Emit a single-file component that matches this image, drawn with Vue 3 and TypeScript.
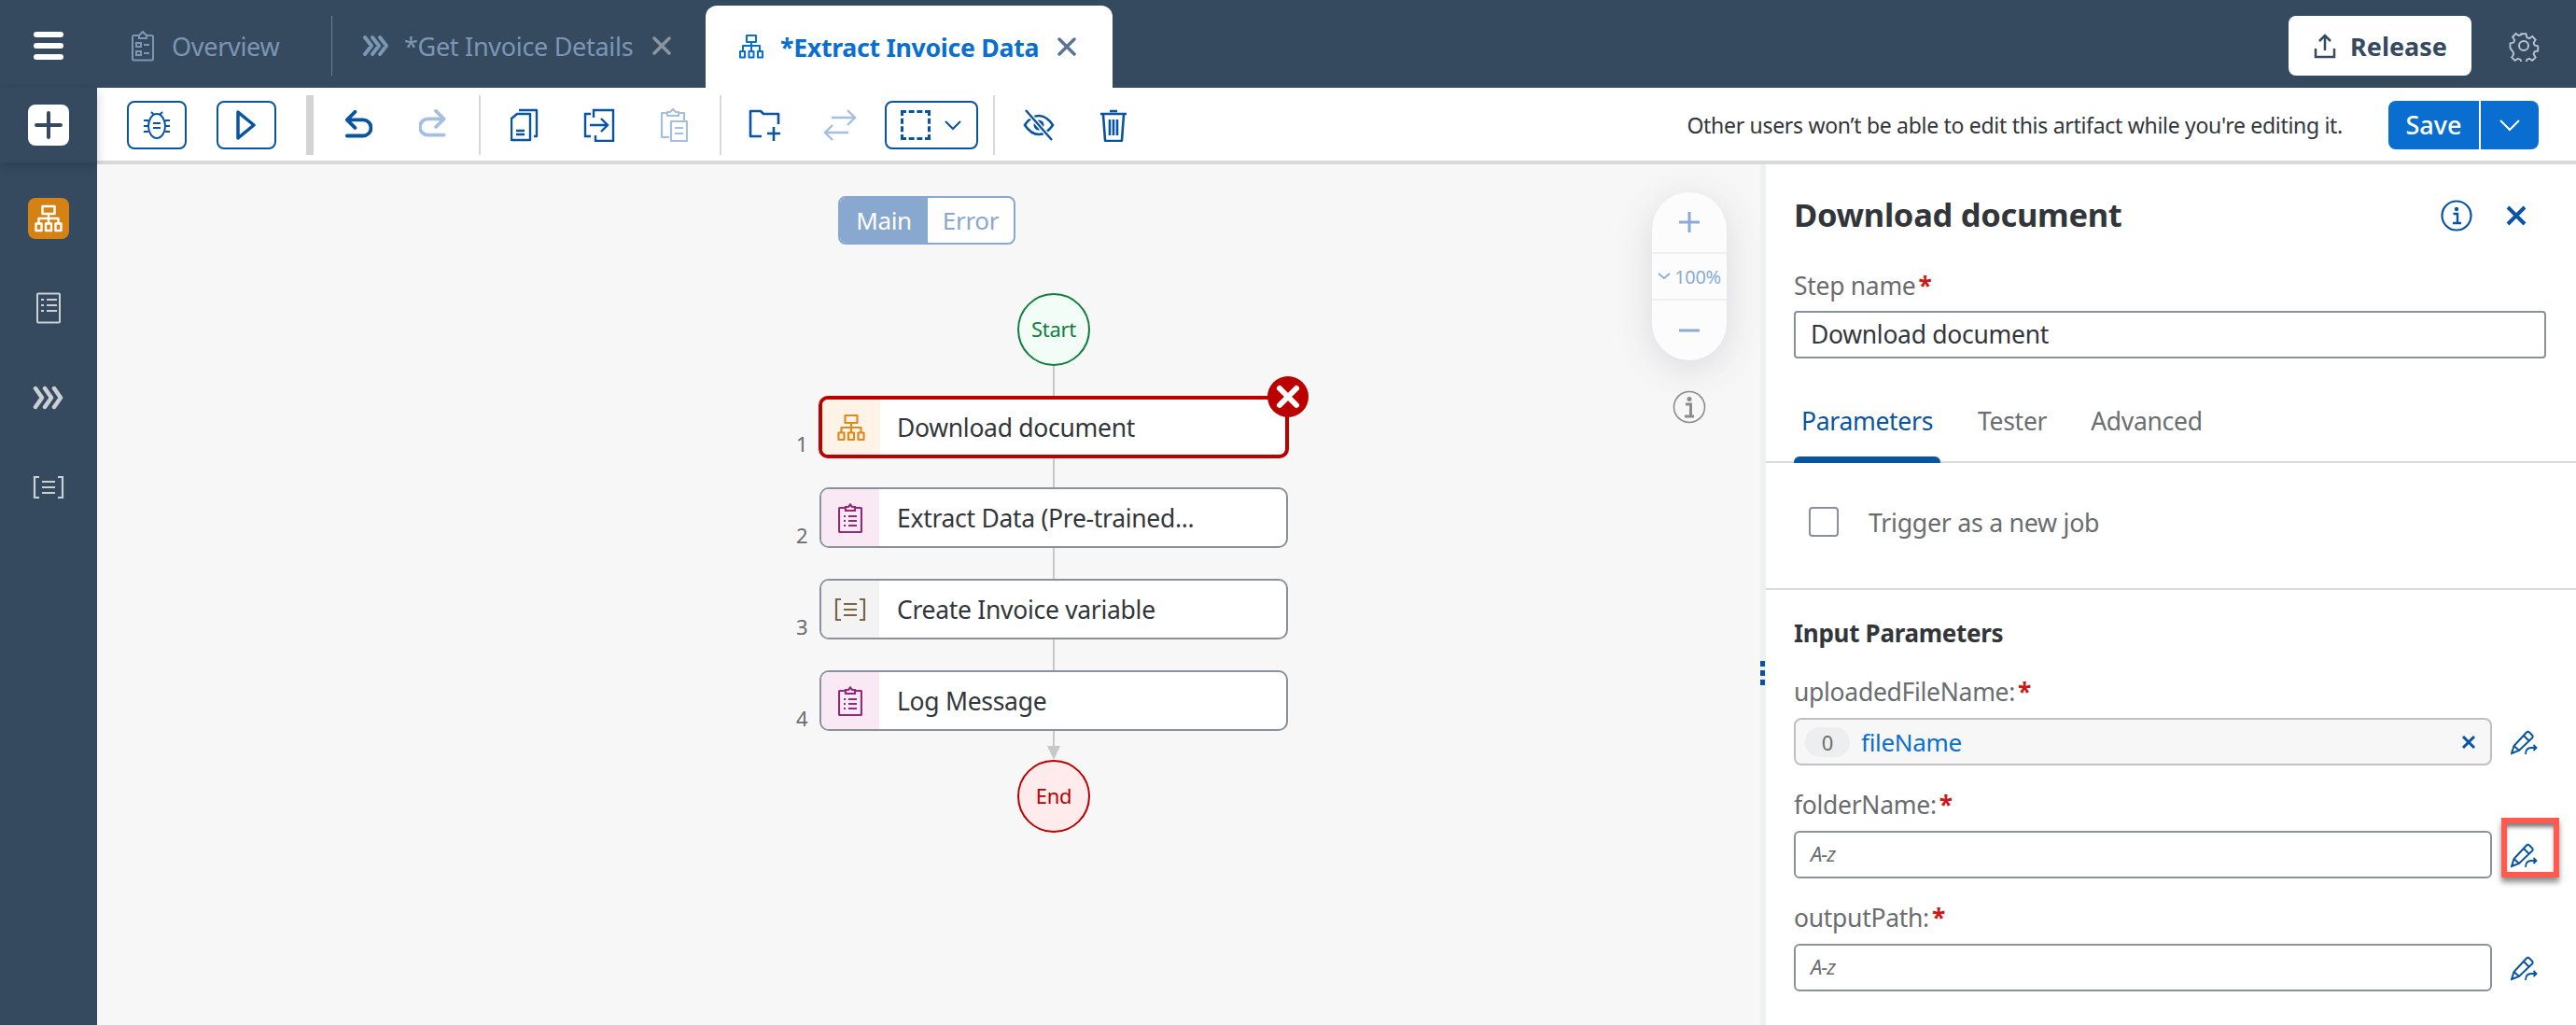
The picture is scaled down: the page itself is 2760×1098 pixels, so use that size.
<script setup lang="ts">
interface Step { n: number; label: string; kind: string }
const steps: Step[] = [
  { n: 1, label: 'Download document', kind: 'flow' },
  { n: 2, label: 'Extract Data (Pre-trained...', kind: 'clip' },
  { n: 3, label: 'Create Invoice variable', kind: 'var' },
  { n: 4, label: 'Log Message', kind: 'clip' },
]
const fields = [
  { label: 'folderName:', hl: true },
  { label: 'outputPath:', hl: false },
]
</script>

<template>
  <div class="app">
    <header class="topbar">
      <div class="burger"><i></i><i></i><i></i></div>
      <div class="tab t-over">
        <svg width="24" height="34" viewBox="0 0 24 34" class="dim"><path d="M8 6H2.500A1.500 1.500 0 0 0 1 7.500V31a1.500 1.500 0 0 0 1.500 1.500h19A1.500 1.500 0 0 0 23 31V7.500A1.500 1.500 0 0 0 21.500 6H16M8 6l4-4 4 4v3H8zM5 14h5v4H5zM13 16h6M5 23h5v4H5zM13 25h6" fill="none" stroke="currentColor" stroke-width="2"/></svg>
        <span>Overview</span>
      </div>
      <div class="tab-sep"></div>
      <div class="tab t-get">
        <svg width="29" height="24" viewBox="0 0 29 24" class="dim"><path d="M3 3l7 9-7 9M11 3l7 9-7 9M19 3l7 9-7 9" fill="none" stroke="currentColor" stroke-width="4" stroke-linecap="round" stroke-linejoin="round"/></svg>
        <span>*Get Invoice Details</span>
        <svg width="20" height="20" viewBox="0 0 20 20" class="tab-x"><path d="M2 2l16 16M18 2L2 18" stroke="currentColor" stroke-width="3.500" stroke-linecap="round"/></svg>
      </div>
      <div class="tab active">
        <svg width="26" height="26" viewBox="0 0 26 26"><path d="M8 1h10v7H8zM13 8v4M4 17v-5h18v5M13 12v5M1 18h5v6.500H1zM10.500 18h5v6.500h-5zM20 18h5v6.500h-5z" fill="none" stroke="currentColor" stroke-width="2" stroke-linejoin="round"/></svg>
        <span>*Extract Invoice Data</span>
        <svg width="20" height="20" viewBox="0 0 20 20" class="tab-x"><path d="M2 2l16 16M18 2L2 18" stroke="currentColor" stroke-width="3.500" stroke-linecap="round"/></svg>
      </div>
      <div class="grow"></div>
      <button class="release">
        <svg width="26" height="28" viewBox="0 0 26 28"><path d="M13 19V3M7 9l6-6 6 6M3 17v9h20v-9" fill="none" stroke="currentColor" stroke-width="2.500"/></svg>
        <span>Release</span>
      </button>
      <svg class="gear" width="34" height="34" viewBox="0 0 34 34"><path d="M14 2h6l1 4.500 3 1.300 4-2.500 4 4.200-2.500 4 1.200 3 4.300 1v6l-4.300 1-1.200 3 2.500 4-4 4.200-4-2.500-3 1.300-1 4.500h-6l-1-4.500-3-1.300-4 2.500-4-4.200 2.500-4-1.200-3L0 20v-6l4.300-1 1.200-3-2.500-4 4-4.200 4 2.500 3-1.300z" transform="translate(2.500 2.500) scale(.85)" fill="none" stroke="currentColor" stroke-width="2.200"/><circle cx="17" cy="17" r="5" fill="none" stroke="currentColor" stroke-width="2"/></svg>
    </header>

    <div class="body">
      <aside class="rail">
        <div class="rail-top">
          <button class="plus"><svg width="30" height="30" viewBox="0 0 30 30"><path d="M15 2v26M2 15h26" stroke="#354a5f" stroke-width="4" stroke-linecap="round"/></svg></button>
        </div>
        <div class="rail-list">
          <div class="rail-btn on"><svg width="30" height="30" viewBox="0 0 30 30"><path d="M8.500 2h13v8h-13zM15 10v5M4.500 20v-5h21v5M15 15v5M1.500 20.500h6V28h-6zM12 20.500h6V28h-6zM22.500 20.500h6V28h-6z" fill="none" stroke="#fff" stroke-width="2.400" stroke-linejoin="round"/></svg></div>
          <div class="rail-btn"><svg width="26" height="34" viewBox="0 0 26 34"><path d="M2 1.500h22a1 1 0 0 1 1 1v29a1 1 0 0 1-1 1H2a1 1 0 0 1-1-1v-29a1 1 0 0 1 1-1z" fill="none" stroke="#ccd0d4" stroke-width="2"/><path d="M5 8h3M11 8h11M5 14h3M11 14h11M5 20h3M11 20h11" stroke="#ccd0d4" stroke-width="2"/></svg></div>
          <div class="rail-btn"><svg width="34" height="26" viewBox="0 0 34 26"><path d="M3 3l7 10-7 10M13 3l7 10-7 10M23 3l7 10-7 10" fill="none" stroke="#ccd0d4" stroke-width="4.500" stroke-linecap="round" stroke-linejoin="round"/></svg></div>
          <div class="rail-btn"><svg width="34" height="26" viewBox="0 0 34 26"><path d="M7 2H2v22h5M27 2h5v22h-5M10 7h14M10 13h14M10 19h14" fill="none" stroke="#ccd0d4" stroke-width="2.200"/></svg></div>
        </div>
      </aside>

      <div class="main">
        <div class="toolbar">
          <button class="tb-box w64">
            <svg width="30" height="34" viewBox="0 0 30 34"><ellipse cx="15" cy="18" rx="9" ry="13" fill="none" stroke="currentColor" stroke-width="2"/><path d="M9 3l3 3M21 3l-3 3M1 12h5M1 18h5M1 24h5M24 12h5M24 18h5M24 24h5M11 15h8M11 20h8" stroke="currentColor" stroke-width="2"/></svg>
          </button>
          <button class="tb-box w64 ml32">
            <svg width="24" height="34" viewBox="0 0 24 34"><path d="M3 3l17 14L3 31z" fill="none" stroke="currentColor" stroke-width="3.500" stroke-linejoin="round"/></svg>
          </button>
          <div class="thick-sep"></div>
          <button class="tb-i w80 first">
            <svg width="30" height="34" viewBox="0 0 30 34"><path d="M11 2L2 11l9 9M3 11h17a8 8 0 0 1 0 18H2" fill="none" stroke="currentColor" stroke-width="4" stroke-linecap="round" stroke-linejoin="round" transform="scale(.95 .95) translate(1 1)"/></svg>
          </button>
          <button class="tb-i w80 off">
            <svg width="30" height="34" viewBox="0 0 30 34"><path d="M19 2l9 9-9 9M27 11H10a8 8 0 0 0 0 18h18" fill="none" stroke="currentColor" stroke-width="4" stroke-linecap="round" stroke-linejoin="round" transform="scale(.95 .95)"/></svg>
          </button>
          <div class="sep"></div>
          <button class="tb-i w80 ml8">
            <svg width="30" height="36" viewBox="0 0 30 36"><path d="M9 2h19v28h-3M1 11l6-5h14v28H1z" fill="none" stroke="currentColor" stroke-width="2.400" stroke-linejoin="round"/><path d="M6 24h9M6 28h9" stroke="currentColor" stroke-width="2.400"/></svg>
          </button>
          <button class="tb-i w80">
            <svg width="34" height="36" viewBox="0 0 34 36"><path d="M11 10V2h21v33H13v-6M8 30H2V6h6" fill="none" stroke="currentColor" stroke-width="2.400"/><path d="M7 18h19M19 11l7 7-7 7" fill="none" stroke="currentColor" stroke-width="2.400"/></svg>
          </button>
          <button class="tb-i w80 off narrow">
            <svg width="30" height="36" viewBox="0 0 30 36"><path d="M8 5H2v26h8M20 5h6v8M8 8V4h3l3-3 3 3h3v4zM12 14h17v21H12zM16 21h9M16 27h9" fill="none" stroke="currentColor" stroke-width="2.200" stroke-linejoin="round"/></svg>
          </button>
          <div class="sep"></div>
          <button class="tb-i w80 ml8">
            <svg width="36" height="36" viewBox="0 0 36 36"><path d="M14 30H2V3h11l3 3h16v11" fill="none" stroke="currentColor" stroke-width="2.600" stroke-linejoin="round"/><path d="M20 27h14M27 20v15" fill="none" stroke="currentColor" stroke-width="2.600"/></svg>
          </button>
          <button class="tb-i w80 off">
            <svg width="36" height="36" viewBox="0 0 36 36"><path d="M9 10h25M26 2l8 8-8 8M27 26H2M10 18l-8 8 8 8" fill="none" stroke="currentColor" stroke-width="2.400"/></svg>
          </button>
          <button class="tb-box select">
            <span class="dash"></span>
            <svg width="20" height="12" viewBox="0 0 20 12"><path d="M2 2l8 8 8-8" fill="none" stroke="currentColor" stroke-width="2"/></svg>
          </button>
          <div class="sep s2"></div>
          <button class="tb-i w80 ml8">
            <svg width="34" height="36" viewBox="0 0 34 36"><path d="M2 18c4-6 9-10 15-10s11 4 15 10c-4 6-9 10-15 10S6 24 2 18z" fill="none" stroke="currentColor" stroke-width="2.600"/><circle cx="17" cy="18" r="5.500" fill="currentColor"/><path d="M3 2l28 32" stroke="#fff" stroke-width="5"/><path d="M3 2l28 32" stroke="currentColor" stroke-width="2.400"/></svg>
          </button>
          <button class="tb-i w80">
            <svg width="30" height="36" viewBox="0 0 30 36"><path d="M1 6h28M11 3h8M4 7l2 27a1 1 0 0 0 1 1h16a1 1 0 0 0 1-1l2-27M11 12v17M15 12v17M19 12v17" fill="none" stroke="currentColor" stroke-width="2.600"/></svg>
          </button>
          <div class="grow"></div>
          <span class="notice">Other users won’t be able to edit this artifact while you're editing it.</span>
          <div class="save">
            <button class="save-a">Save</button>
            <button class="save-b"><svg width="24" height="14" viewBox="0 0 24 14"><path d="M2 2l10 10L22 2" fill="none" stroke="#fff" stroke-width="2"/></svg></button>
          </div>
        </div>

        <div class="work">
          <div class="canvas">
            <div class="flow-col">
              <div class="seg">
                <span class="seg-on">Main</span><span class="seg-off">Error</span>
              </div>
              <div class="circle start">Start</div>
              <div class="line l32"></div>
              <template v-for="(s, i) in steps" :key="s.n">
                <div class="step" :class="{ err: s.n === 1 }">
                  <span class="num">{{ s.n }}</span>
                  <div class="pane" :class="s.kind">
                    <svg v-if="s.kind === 'flow'" width="30" height="30" viewBox="0 0 30 30"><path d="M8.500 2h13v8h-13zM15 10v5M4.500 20v-5h21v5M15 15v5M1.500 20.500h6V28h-6zM12 20.500h6V28h-6zM22.500 20.500h6V28h-6z" fill="none" stroke="#df8a1d" stroke-width="2.200" stroke-linejoin="round"/></svg>
                    <svg v-else-if="s.kind === 'clip'" width="26" height="32" viewBox="0 0 26 32"><path d="M8 5H2a1 1 0 0 0-1 1v24a1 1 0 0 0 1 1h22a1 1 0 0 0 1-1V6a1 1 0 0 0-1-1h-6M8 8V4h3l2-2.500L15 4h3v4zM6 14h2M11 14h9M6 19h2M11 19h9M6 24h2M11 24h9" fill="none" stroke="#922a76" stroke-width="2.200"/></svg>
                    <svg v-else width="34" height="26" viewBox="0 0 34 26"><path d="M7 2H2v22h5M27 2h5v22h-5M10 7h14M10 13h14M10 19h14" fill="none" stroke="#7a6544" stroke-width="2.200"/></svg>
                  </div>
                  <span class="step-label">{{ s.label }}</span>
                  <svg v-if="s.n === 1" class="err-badge" width="44" height="44" viewBox="0 0 44 44"><circle cx="22" cy="22" r="22" fill="#bb0000"/><path d="M13 13l18 18M31 13L13 31" stroke="#fff" stroke-width="6" stroke-linecap="round"/></svg>
                </div>
                <div v-if="i < steps.length - 1" class="line" :class="i === 0 ? 'l32' : 'l33'"></div>
              </template>
              <div class="line l18"></div>
              <div class="arrow"></div>
              <div class="circle end">End</div>
            </div>
            <div class="zoom-wrap">
              <div class="zoom">
                <div class="z-btn"><svg width="24" height="24" viewBox="0 0 24 24"><path d="M12 1v22M1 12h22" stroke="#8aabd3" stroke-width="3"/></svg></div>
                <div class="z-mid"><svg width="14" height="8" viewBox="0 0 14 8"><path d="M1 1l6 5 6-5" fill="none" stroke="#8aabd3" stroke-width="1.800"/></svg><span>100%</span></div>
                <div class="z-btn"><svg width="24" height="24" viewBox="0 0 24 24"><path d="M1 12h22" stroke="#8aabd3" stroke-width="3"/></svg></div>
              </div>
              <svg class="z-info" width="36" height="36" viewBox="0 0 36 36"><circle cx="18" cy="18" r="16.500" fill="none" stroke="#8c8c8c" stroke-width="1.600"/><circle cx="18" cy="9.500" r="2.500" fill="#8c8c8c"/><path d="M14 15h5.500v12M13 28h10" fill="none" stroke="#8c8c8c" stroke-width="3"/></svg>
            </div>
          </div>

          <aside class="panel">
            <div class="handle"><i></i><i></i><i></i></div>
            <div class="p-top">
              <div class="p-head">
                <h2>Download document</h2>
                <svg width="34" height="34" viewBox="0 0 34 34"><circle cx="17" cy="17" r="15.500" fill="none" stroke="#0854a0" stroke-width="2.200"/><circle cx="17" cy="10" r="2.200" fill="#0854a0"/><path d="M13.500 15H18v9.500M13 25h9" fill="none" stroke="#0854a0" stroke-width="2.400"/></svg>
                <svg class="p-x" width="24" height="24" viewBox="0 0 24 24"><path d="M3 3l18 18M21 3L3 21" stroke="#0854a0" stroke-width="4"/></svg>
              </div>
              <label class="lab">Step name<b>*</b></label>
              <div class="inp val">Download document</div>
            </div>
            <nav class="tabs">
              <span class="ptab act">Parameters</span>
              <span class="ptab">Tester</span>
              <span class="ptab">Advanced</span>
            </nav>
            <div class="trig">
              <span class="chk"></span>
              <span>Trigger as a new job</span>
            </div>
            <div class="params">
              <h3>Input Parameters</h3>
              <label class="lab">uploadedFileName:<b>*</b></label>
              <div class="row">
                <div class="inp filled">
                  <span class="chip">0</span>
                  <span class="fname">fileName</span>
                  <svg width="16" height="16" viewBox="0 0 16 16"><path d="M2 2l12 12M14 2L2 14" stroke="#0854a0" stroke-width="3"/></svg>
                </div>
                <div class="pen-cell">
                  <svg width="30" height="28" viewBox="0 0 30 28"><path d="M1 25l2.500-8L17 2.500a2 2 0 0 1 3 0l3 3a2 2 0 0 1 0 3L9 22zM14 6l6 6M3.500 17L9 22" fill="none" stroke="#0854a0" stroke-width="2"/><path d="M16 26c0-4 2-7 6-7h5M24.500 16l3 3-3 3" fill="none" stroke="#0854a0" stroke-width="1.800"/></svg>
                </div>
              </div>
              <template v-for="f in fields" :key="f.label">
                <label class="lab mt">{{ f.label }}<b>*</b></label>
                <div class="row">
                  <div class="inp ph"><em>A-z</em></div>
                  <div class="pen-cell" :class="{ hl: f.hl }">
                    <svg width="30" height="28" viewBox="0 0 30 28"><path d="M1 25l2.500-8L17 2.500a2 2 0 0 1 3 0l3 3a2 2 0 0 1 0 3L9 22zM14 6l6 6M3.500 17L9 22" fill="none" stroke="#0854a0" stroke-width="2"/><path d="M16 26c0-4 2-7 6-7h5M24.500 16l3 3-3 3" fill="none" stroke="#0854a0" stroke-width="1.800"/></svg>
                  </div>
                </div>
              </template>
            </div>
          </aside>
        </div>
      </div>
    </div>
  </div>
</template>

<style>
html, body { margin: 0; padding: 0; overflow: hidden; background: #354a5f; }
</style>

<style scoped>
* { box-sizing: border-box; }
button { border: 0; background: none; padding: 0; font: inherit; color: inherit; }
.app { width: 2760px; height: 1098px; display: flex; flex-direction: column; overflow: hidden; font-family: "Noto Sans", "Liberation Sans", sans-serif; color: #32363a; letter-spacing: -0.3px; }
.grow { flex: 1; }

.topbar { height: 94px; flex: none; background: #354a5f; display: flex; align-items: center; position: relative; padding-top: 4px; }
.burger { width: 104px; flex: none; display: flex; flex-direction: column; align-items: center; gap: 6px; }
.burger i { display: block; width: 32px; height: 6px; border-radius: 3px; background: #fff; }
.tab { display: flex; align-items: center; font-size: 27px; color: #7c96b4; white-space: nowrap; }
.dim { color: #7c96b4; flex: none; }
.t-over { margin-left: 37px; gap: 19px; width: 214px; }
.tab-sep { width: 1px; height: 64px; background: #6a7f95; flex: none; }
.t-get { margin-left: 32px; gap: 16px; width: 368px; }
.t-get .tab-x { margin-left: 5px; color: #8b95a0; flex: none; }
.tab.active { align-self: flex-end; height: 88px; width: 436px; background: #fff; border-radius: 12px 12px 0 0; padding-left: 36px; color: #0a6ed1; font-weight: 700; font-size: 26.7px; gap: 18px; }
.tab.active span { margin-right: 2px; }
.tab.active .tab-x { color: #5b7590; flex: none; }
.release { width: 196px; height: 64px; background: #fff; border-radius: 8px; color: #354a5f; font-size: 27px; font-weight: 700; display: flex; align-items: center; justify-content: center; gap: 14px; flex: none; }
.gear { color: #b8c4d2; margin: 0 39px 0 39px; flex: none; }

.body { flex: 1; display: flex; min-height: 0; }
.rail { width: 104px; flex: none; background: #354a5f; display: flex; flex-direction: column; }
.rail-top { height: 80px; display: flex; justify-content: center; padding-top: 18px; box-shadow: 0 4px 10px rgba(20, 30, 45, .22); position: relative; }
.plus { width: 44px; height: 44px; background: #fff; border-radius: 8px; display: flex; align-items: center; justify-content: center; }
.rail-list { display: flex; flex-direction: column; align-items: center; padding-top: 38px; gap: 52px; }
.rail-btn { width: 44px; height: 44px; border-radius: 8px; display: flex; align-items: center; justify-content: center; }
.rail-btn.on { background: #d58215; }

.main { flex: 1; min-width: 0; display: flex; flex-direction: column; }
.toolbar { height: 82px; flex: none; background: #fff; border-bottom: 4px solid #d9d9d9; display: flex; align-items: center; padding: 1px 40px 0 32px; }
.tb-box { height: 52px; border: 2px solid #0854a0; border-radius: 8px; color: #0854a0; display: flex; align-items: center; justify-content: center; flex: none; }
.w64 { width: 64px; }
.ml32 { margin-left: 32px; }
.thick-sep { width: 8px; height: 64px; background: #d3d3d3; margin: 0 0 0 32px; flex: none; }
.tb-i { height: 52px; display: flex; align-items: center; justify-content: center; color: #0854a0; flex: none; }
.w80 { width: 80px; }
.first { margin-left: 8px; }
.ml8 { margin-left: 7px; }
.off { color: #a5bfe0; }
.narrow { width: 80px; }
.sep { width: 2px; height: 64px; background: #d9d9d9; flex: none; margin-left: 9px; }
.sep.s2 { margin-left: 16px; }
.select { width: 100px; gap: 14px; margin-left: 8px; }
.dash { width: 32px; height: 32px; border: 3px dashed #0854a0; display: block; }
.notice { font-size: 23px; color: #32363a; margin-right: 49px; white-space: nowrap; }
.save { display: flex; height: 52px; flex: none; }
.save-a { width: 97px; background: #0a6ed1; color: #fff; font-size: 27px; font-weight: 500; border-radius: 8px 0 0 8px; }
.save-b { width: 62px; margin-left: 2px; background: #0a6ed1; border-radius: 0 8px 8px 0; display: flex; align-items: center; justify-content: center; }

.work { flex: 1; min-height: 0; display: flex; }
.canvas { flex: 1; background: #f7f7f7; position: relative; display: flex; min-width: 0; }
.flow-col { width: 504px; margin-left: 773px; display: flex; flex-direction: column; align-items: center; padding-top: 34px; }
.seg { align-self: flex-start; margin-left: 21px; width: 190px; height: 52px; display: flex; border: 2px solid #89a8cf; border-radius: 8px; background: #fff; font-size: 26px; margin-bottom: 52px; overflow: hidden; }
.seg-on { width: 94px; background: #89a8cf; color: #fff; display: flex; align-items: center; justify-content: center; }
.seg-off { flex: 1; color: #89a8cf; display: flex; align-items: center; justify-content: center; }
.circle { width: 78px; height: 78px; border-radius: 50%; display: flex; align-items: center; justify-content: center; font-size: 22px; flex: none; border: 2px solid; padding-bottom: 2px; }
.start { background: #f1fdf6; border-color: #107e3e; color: #107e3e; }
.end { background: #ffebeb; border-color: #bb0000; color: #bb0000; }
.line { width: 2px; background: #c8c8c8; flex: none; }
.l32 { height: 32px; }
.l33 { height: 33px; }
.l18 { height: 16px; }
.arrow { width: 0; height: 0; border-left: 7px solid transparent; border-right: 7px solid transparent; border-top: 15px solid #c8c8c8; flex: none; }
.step { width: 502px; height: 65px; border: 2px solid #89919a; border-radius: 10px; background: #fff; display: flex; align-items: center; position: relative; flex: none; }
.step.err { width: 504px; height: 67px; border: 4px solid #bb0000; margin-bottom: -1px; }
.num { position: absolute; left: -27px; top: 38px; font-size: 22px; color: #6a6d70; line-height: 1; letter-spacing: 0; }
.err .num { left: -28px; top: 36px; }
.pane { width: 62px; align-self: stretch; display: flex; align-items: center; justify-content: center; border-radius: 8px 0 0 8px; flex: none; }
.pane.flow { background: #fef3e6; border-radius: 6px 0 0 6px; }
.pane.clip { background: #f9e9f5; }
.pane.var { background: #f3f3f3; }
.step-label { margin-left: 19px; font-size: 26.5px; color: #32363a; white-space: nowrap; }
.err .step-label { margin-left: 18px; }
.err-badge { position: absolute; right: -25px; top: -25px; }

.zoom-wrap { position: absolute; left: 1666px; top: 30px; width: 80px; display: flex; flex-direction: column; align-items: center; }
.zoom { width: 80px; height: 180px; border-radius: 40px; background: #fcfcfc; box-shadow: 0 8px 40px rgba(60, 70, 85, .16); display: flex; flex-direction: column; overflow: hidden; }
.z-btn { flex: 1; display: flex; align-items: center; justify-content: center; }
.z-mid { height: 52px; border-top: 2px solid #f0f0f0; border-bottom: 2px solid #f0f0f0; display: flex; align-items: center; justify-content: center; gap: 4px; font-size: 20px; color: #8aabd3; flex: none; letter-spacing: -0.3px; white-space: nowrap; }
.z-info { margin-top: 32px; }

.panel { width: 874px; flex: none; background: #fff; border-left: 6px solid #eef0f2; position: relative; display: flex; flex-direction: column; }
.handle { position: absolute; left: -6px; top: 532px; width: 5px; display: flex; flex-direction: column; gap: 4px; align-items: center; }
.handle i { width: 5px; height: 6px; background: #0854a0; display: block; }
.p-top { padding: 33px 32px 0 30px; }
.p-head { display: flex; align-items: center; height: 44px; }
.p-head h2 { margin: -3px 0 0; flex: 1; font-size: 34.5px; font-weight: 700; color: #32363a; white-space: nowrap; }
.p-x { margin: 0 20px 0 35px; flex: none; }
.lab { display: block; font-size: 26.5px; color: #6a6d70; white-space: nowrap; height: 34px; line-height: 34px; }
.lab b { color: #cc1919; font-weight: 700; margin-left: 3px; }
.p-top .lab { margin-top: 36px; margin-bottom: 10px; }
.inp { border: 2px solid #89919a; border-radius: 4px; height: 51px; background: #fff; font-size: 26.5px; display: flex; align-items: center; padding-left: 16px; }
.val { color: #32363a; padding-bottom: 2px; }
.tabs { display: flex; height: 112px; padding: 49px 0 0 30px; border-bottom: 2px solid #d9d9d9; flex: none; }
.ptab { font-size: 26.5px; color: #6a6d70; margin-right: 47px; height: 61px; white-space: nowrap; position: relative; }
.ptab.act { color: #0854a0; width: 157px; margin-right: 40px; padding-left: 8px; }
.ptab.act::after { content: ""; position: absolute; left: 0; right: 0; bottom: -2px; height: 7px; background: #0854a0; border-radius: 6px 6px 0 0; }
.trig { height: 136px; flex: none; display: flex; align-items: center; gap: 32px; padding: 0 0 8px 46px; font-size: 26.8px; color: #6a6d70; border-bottom: 2px solid #d9d9d9; }
.chk { width: 32px; height: 32px; border: 2px solid #89919a; border-radius: 4px; background: #fff; flex: none; }
.params { padding: 28px 0 0 30px; }
.params h3 { margin: 0 0 28px; font-size: 26px; font-weight: 700; color: #32363a; height: 36px; line-height: 36px; }
.row { display: flex; align-items: flex-start; margin-top: 11px; }
.row .inp { width: 748px; height: 51px; flex: none; }
.filled { background: #f7f7f7; border-color: #c0c0c0 !important; padding-left: 10px !important; border-radius: 8px !important; }
.chip { width: 48px; height: 32px; border-radius: 16px; background: #eceeef; color: #6a6d70; font-size: 22px; display: flex; align-items: center; justify-content: center; flex: none; letter-spacing: 0; }
.fname { flex: 1; margin-left: 12px; color: #0a6ed1; font-size: 26px; }
.filled svg { margin-right: 15px; flex: none; }
.ph { border-radius: 6px !important; padding-bottom: 3px; }
.ph em { font-size: 22px; color: #6a6d70; font-style: italic; letter-spacing: -1px; }
.pen-cell { width: 62px; height: 64px; margin: -14px 0 0 10px; display: flex; align-items: flex-start; justify-content: flex-start; border: 6px solid transparent; padding: 21px 0 0 4px; position: relative; flex: none; }
.pen-cell.hl { border-color: #ff5a4f; box-shadow: 0 5px 6px rgba(0,0,0,.45), inset 0 5px 4px -1px rgba(0,0,0,.5); }
.mt { margin-top: 25px; }
</style>
